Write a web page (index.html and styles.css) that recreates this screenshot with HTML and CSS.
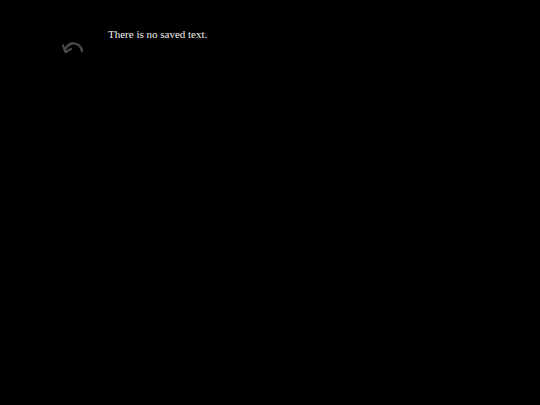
FILE: index.html
```html
<!DOCTYPE html>
<html>
<head>
<meta charset="utf-8">
<link rel="stylesheet" href="styles.css">
</head>
<body>
<div class="page">
  <div class="undo">
    <svg width="22" height="14" viewBox="0 0 22 14">
      <path d="M20 11 C19 5 14 3 10 3.5 C7 4 5 6 4 8" fill="none" stroke="#4a4a4a" stroke-width="2.3" stroke-linecap="round"/>
      <path d="M1 5.5 L3.5 12 L9 9" fill="none" stroke="#4a4a4a" stroke-width="2.3" stroke-linecap="round" stroke-linejoin="round"/>
    </svg>
  </div>
  <p class="msg">There is no saved text.</p>
</div>
</body>
</html>
```
FILE: styles.css
```css
html, body {
  margin: 0;
  padding: 0;
  background: #000;
  height: 100%;
}
.page {
  display: flex;
  align-items: flex-start;
  padding: 28px 0 0 62px;
}
.undo {
  margin-top: 12px;
  width: 22px;
  height: 14px;
}
.undo svg { display: block; }
.msg {
  margin: 0 0 0 24px;
  font-family: "Liberation Serif", serif;
  font-size: 11px;
  color: #f0f0f0;
  line-height: 13px;
}
```
